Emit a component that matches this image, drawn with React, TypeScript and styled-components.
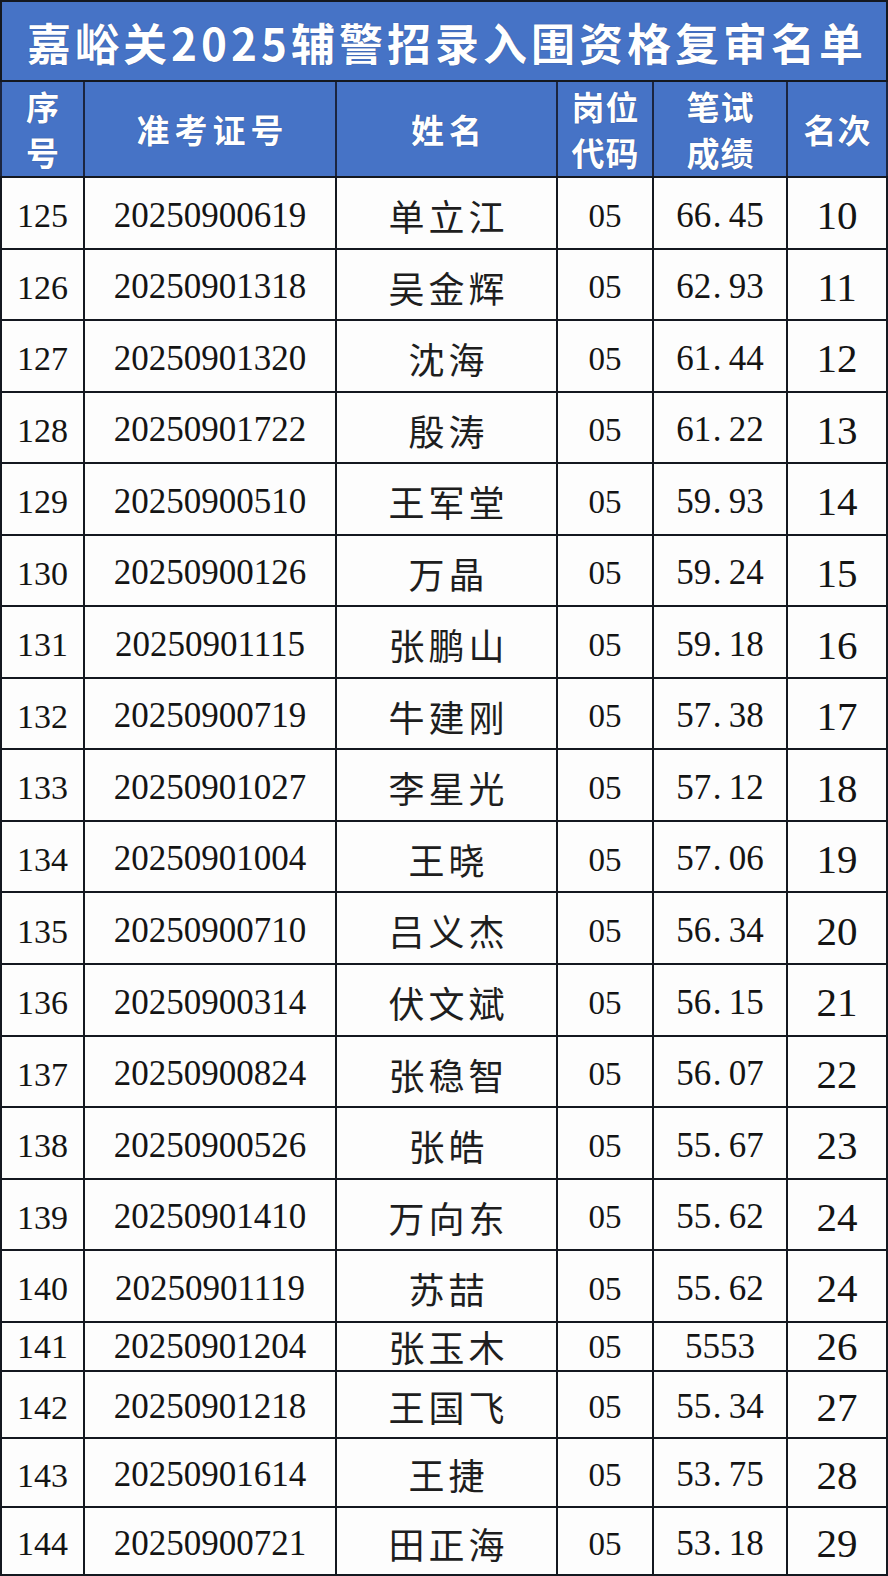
import React from 'react';
import styled, { createGlobalStyle } from 'styled-components';

interface Entry {
  id: number;
  ticket: string;
  name: string;
  post: string;
  score: string;
  rank: number;
}

const entries: Entry[] = [
  { id: 125, ticket: '20250900619', name: '单立江', post: '05', score: '66.45', rank: 10 },
  { id: 126, ticket: '20250901318', name: '吴金辉', post: '05', score: '62.93', rank: 11 },
  { id: 127, ticket: '20250901320', name: '沈海', post: '05', score: '61.44', rank: 12 },
  { id: 128, ticket: '20250901722', name: '殷涛', post: '05', score: '61.22', rank: 13 },
  { id: 129, ticket: '20250900510', name: '王军堂', post: '05', score: '59.93', rank: 14 },
  { id: 130, ticket: '20250900126', name: '万晶', post: '05', score: '59.24', rank: 15 },
  { id: 131, ticket: '20250901115', name: '张鹏山', post: '05', score: '59.18', rank: 16 },
  { id: 132, ticket: '20250900719', name: '牛建刚', post: '05', score: '57.38', rank: 17 },
  { id: 133, ticket: '20250901027', name: '李星光', post: '05', score: '57.12', rank: 18 },
  { id: 134, ticket: '20250901004', name: '王晓', post: '05', score: '57.06', rank: 19 },
  { id: 135, ticket: '20250900710', name: '吕义杰', post: '05', score: '56.34', rank: 20 },
  { id: 136, ticket: '20250900314', name: '伏文斌', post: '05', score: '56.15', rank: 21 },
  { id: 137, ticket: '20250900824', name: '张稳智', post: '05', score: '56.07', rank: 22 },
  { id: 138, ticket: '20250900526', name: '张皓', post: '05', score: '55.67', rank: 23 },
  { id: 139, ticket: '20250901410', name: '万向东', post: '05', score: '55.62', rank: 24 },
  { id: 140, ticket: '20250901119', name: '苏喆', post: '05', score: '55.62', rank: 24 },
  { id: 141, ticket: '20250901204', name: '张玉木', post: '05', score: '5553', rank: 26 },
  { id: 142, ticket: '20250901218', name: '王国飞', post: '05', score: '55.34', rank: 27 },
  { id: 143, ticket: '20250901614', name: '王捷', post: '05', score: '53.75', rank: 28 },
  { id: 144, ticket: '20250900721', name: '田正海', post: '05', score: '53.18', rank: 29 },
];

// the scanned sheet has uneven row heights near the bottom
const rowHeight = (id: number): number => {
  if (id === 141) return 47;
  if (id === 142) return 65;
  if (id === 143) return 67;
  if (id === 144) return 66;
  return 69.56;
};

const columns = '81px 250px 219px 94px 132px 98px';

function Score({ value }: { value: string }): JSX.Element {
  const parts = value.split('.');
  if (parts.length < 2) return <>{value}</>;
  return (
    <>
      {parts[0]}
      <Dot>.</Dot>
      {parts[1]}
    </>
  );
}

function App(): JSX.Element {
  return (
    <>
      <GlobalStyle />
      <Sheet>
        <Title>嘉峪关2025辅警招录入围资格复审名单</Title>
        <HeaderRow>
          <HeadCell>
            <span>序</span>
            <span>号</span>
          </HeadCell>
          <HeadCell>准考证号</HeadCell>
          <HeadCell>姓名</HeadCell>
          <HeadCell $tight>
            <span>岗位</span>
            <span>代码</span>
          </HeadCell>
          <HeadCell $tight>
            <span>笔试</span>
            <span>成绩</span>
          </HeadCell>
          <HeadCell $tight>名次</HeadCell>
        </HeaderRow>
        {entries.map((v) => {
          const h = rowHeight(v.id);
          return (
            <DataRow key={v.id} $h={h} $compact={h < 55}>
              <NumCell $size={34}>{v.id}</NumCell>
              <NumCell $size={35}>{v.ticket}</NumCell>
              <NameCell>{v.name}</NameCell>
              <NumCell $size={33}>{v.post}</NumCell>
              <NumCell $size={35}>
                <Score value={v.score} />
              </NumCell>
              <NumCell $size={41}>{v.rank}</NumCell>
            </DataRow>
          );
        })}
      </Sheet>
    </>
  );
}

const GlobalStyle = createGlobalStyle`
  html, body {
    margin: 0;
    padding: 0;
    background: #ffffff;
  }
`;

const Sheet = styled.div`
  width: 888px;
  box-sizing: border-box;
  padding: 2px;
  display: flex;
  flex-direction: column;
  gap: 2px;
  background: #141820;
`;

const Title = styled.div`
  height: 78px;
  display: flex;
  align-items: center;
  justify-content: center;
  background: #4673c6;
  color: #ffffff;
  font-family: 'Noto Sans CJK SC', sans-serif;
  font-weight: 700;
  font-size: 44px;
  letter-spacing: 4px;
  padding-left: 6px;
  padding-top: 1px;
  box-sizing: border-box;
  text-shadow: 0 0 1px rgba(20, 30, 70, 0.5);
`;

const HeaderRow = styled.div`
  display: grid;
  grid-template-columns: ${columns};
  gap: 2px;
  height: 94px;
  background: #1b2540;
  margin: 0 -2px;
  padding: 0 2px;
`;

const HeadCell = styled.div<{ $tight?: boolean }>`
  background: #4673c6;
  color: #ffffff;
  font-family: 'Noto Sans CJK SC', sans-serif;
  font-weight: 700;
  font-size: 33px;
  line-height: 46px;
  letter-spacing: ${({ $tight }) => ($tight ? '1px' : '5px')};
  padding-left: ${({ $tight }) => ($tight ? '1px' : '5px')};
  display: flex;
  flex-direction: column;
  align-items: center;
  justify-content: center;
  text-shadow: 0 0 1px rgba(20, 30, 70, 0.6);
`;

const DataRow = styled.div<{ $h: number; $compact: boolean }>`
  display: grid;
  grid-template-columns: ${columns};
  gap: 2px;
  height: ${({ $h }) => $h}px;
  --pad: ${({ $compact }) => ($compact ? '1px' : '6px')};
`;

const Cell = styled.div`
  background: #fdfdfd;
  color: #141414;
  display: flex;
  align-items: center;
  justify-content: center;
  padding-top: var(--pad, 6px);
  box-sizing: border-box;
  line-height: 1.1;
  white-space: nowrap;
`;

const NumCell = styled(Cell)<{ $size: number }>`
  font-family: 'Liberation Serif', 'Times New Roman', serif;
  font-size: ${({ $size }) => $size}px;
`;

const NameCell = styled(Cell)`
  font-family: 'Noto Sans CJK SC', sans-serif;
  font-weight: 400;
  font-size: 36px;
  letter-spacing: 4px;
  padding-left: 4px;
  color: #1e1e1e;
`;

const Dot = styled.span`
  display: inline-block;
  width: 0.5em;
  text-align: left;
  padding-left: 0.04em;
  box-sizing: border-box;
`;

export default App;
